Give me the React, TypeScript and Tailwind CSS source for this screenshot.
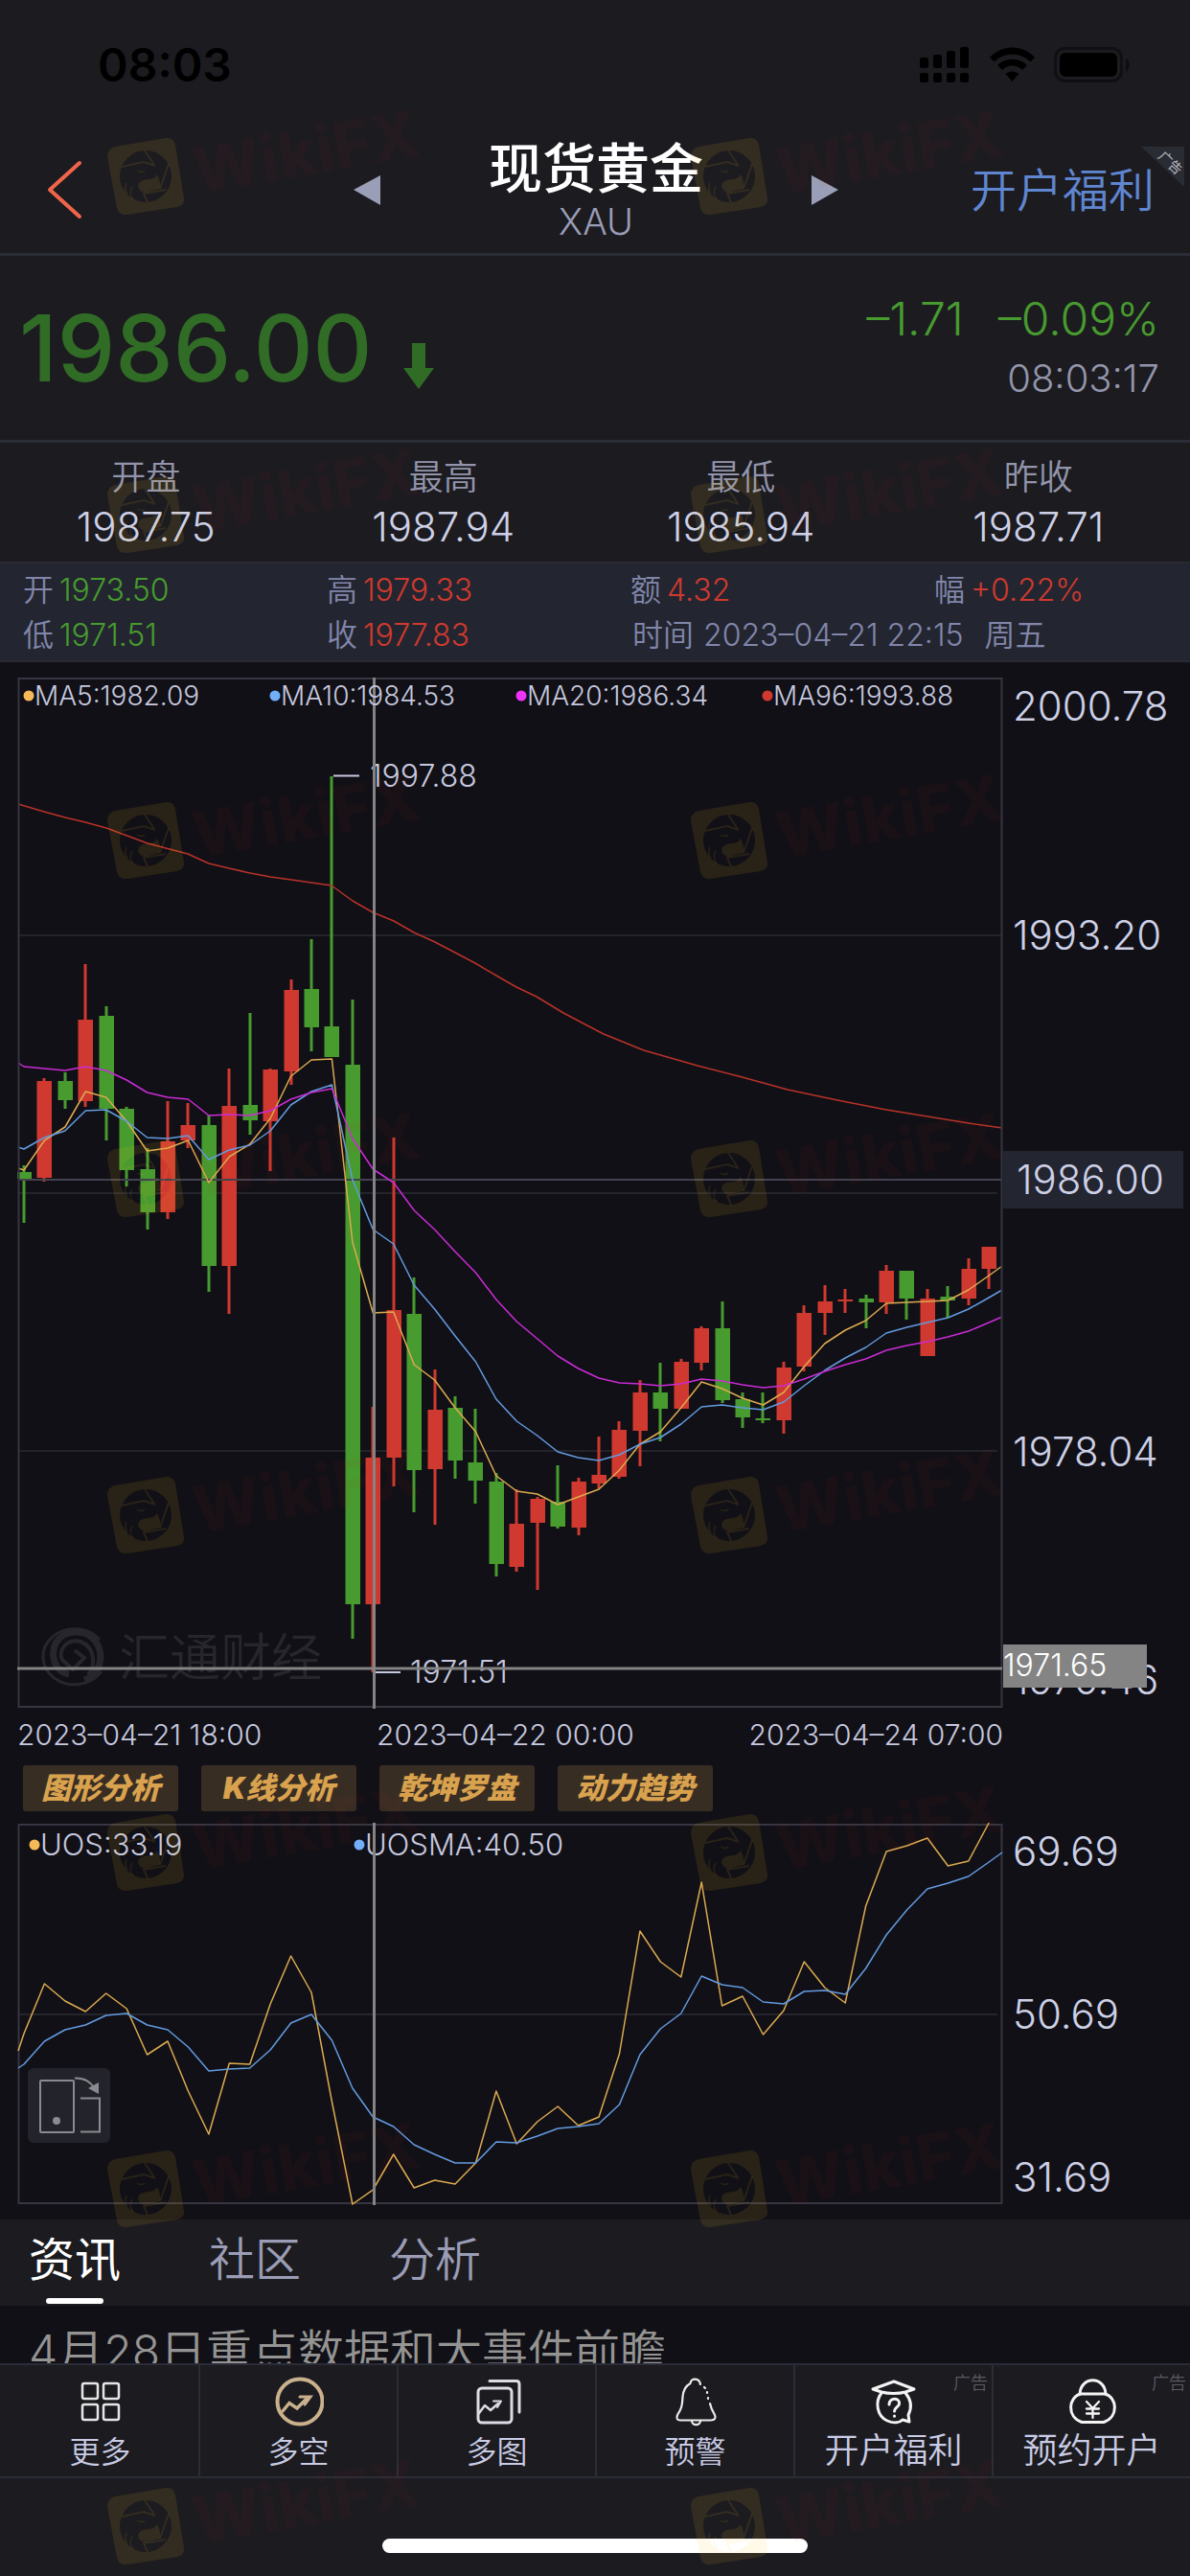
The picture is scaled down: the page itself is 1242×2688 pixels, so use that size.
import React from "react";

const UP = "#d0392f";
const DOWN = "#479b2f";
const X0 = 25;
const STEP = 21.43;

/* Each candle: direction, high, body top, body bottom, low (chart units). */
type Candle = ["u" | "d", number, number, number, number];

const candles: Candle[] = [
  ["d", 1216, 1223, 1230, 1276],
  ["u", 1125, 1128, 1229, 1233],
  ["d", 1119, 1128, 1148, 1157],
  ["u", 1006, 1064, 1149, 1155],
  ["d", 1050, 1060, 1157, 1190],
  ["d", 1155, 1157, 1221, 1238],
  ["d", 1198, 1220, 1265, 1283],
  ["u", 1149, 1191, 1265, 1272],
  ["u", 1151, 1174, 1190, 1198],
  ["d", 1164, 1174, 1321, 1348],
  ["u", 1115, 1154, 1321, 1371],
  ["d", 1057, 1153, 1169, 1184],
  ["u", 1115, 1116, 1170, 1222],
  ["u", 1022, 1033, 1118, 1132],
  ["d", 980, 1032, 1072, 1097],
  ["d", 810, 1071, 1103, 1103],
  ["d", 1043, 1111, 1674, 1710],
  ["u", 1468, 1521, 1674, 1745],
  ["u", 1187, 1367, 1521, 1551],
  ["d", 1333, 1371, 1534, 1578],
  ["u", 1429, 1471, 1533, 1591],
  ["d", 1457, 1469, 1524, 1543],
  ["d", 1470, 1526, 1545, 1569],
  ["d", 1537, 1546, 1632, 1645],
  ["u", 1554, 1590, 1635, 1640],
  ["u", 1562, 1564, 1589, 1659],
  ["d", 1529, 1567, 1593, 1595],
  ["u", 1542, 1546, 1594, 1602],
  ["u", 1499, 1539, 1548, 1553],
  ["u", 1483, 1492, 1541, 1543],
  ["u", 1440, 1453, 1493, 1530],
  ["d", 1422, 1453, 1470, 1504],
  ["u", 1418, 1421, 1470, 1470],
  ["u", 1384, 1386, 1422, 1430],
  ["d", 1358, 1386, 1461, 1464],
  ["d", 1453, 1460, 1479, 1490],
  ["d", 1453, 1480, 1482, 1485],
  ["u", 1421, 1427, 1482, 1496],
  ["u", 1362, 1370, 1426, 1431],
  ["u", 1341, 1358, 1370, 1393],
  ["u", 1345, 1356, 1358, 1370],
  ["d", 1351, 1355, 1359, 1386],
  ["u", 1320, 1326, 1359, 1371],
  ["d", 1326, 1326, 1355, 1377],
  ["u", 1345, 1355, 1415, 1415],
  ["d", 1342, 1353, 1357, 1375],
  ["u", 1313, 1324, 1355, 1362],
  ["u", 1301, 1301, 1324, 1345],
];

/* Series carry one value at the left edge, one per candle and one at the right edge. */
const ma5 = [1219, 1221, 1190, 1176, 1139, 1145, 1170, 1201, 1198, 1190, 1234, 1207, 1194, 1167, 1123, 1106, 1105, 1296, 1370, 1369, 1424, 1440, 1469, 1494, 1540, 1556, 1559, 1570, 1562, 1554, 1534, 1507, 1494, 1469, 1442, 1449, 1459, 1466, 1453, 1426, 1402, 1388, 1378, 1360, 1359, 1358, 1357, 1346, 1331, 1321];
const ma10 = [1197, 1199, 1187, 1180, 1159, 1158, 1170, 1187, 1188, 1185, 1210, 1200, 1195, 1180, 1153, 1139, 1132, 1231, 1283, 1298, 1341, 1366, 1394, 1421, 1460, 1483, 1498, 1515, 1521, 1524, 1518, 1507, 1500, 1486, 1468, 1466, 1469, 1471, 1463, 1446, 1430, 1417, 1406, 1391, 1385, 1380, 1375, 1366, 1354, 1346];
const ma20 = [1109, 1113, 1115, 1117, 1113, 1117, 1127, 1140, 1145, 1147, 1164, 1163, 1164, 1159, 1147, 1140, 1136, 1188, 1220, 1234, 1263, 1283, 1306, 1328, 1356, 1379, 1397, 1415, 1428, 1438, 1443, 1444, 1446, 1444, 1439, 1441, 1445, 1448, 1446, 1439, 1431, 1424, 1418, 1409, 1404, 1400, 1395, 1389, 1380, 1374];
const ma96 = "19,839 46,847 68,853 89,858 111,864 154,880 196,891 218,901 239,906 261,911 282,915 304,918 346,924 368,940 389,952 411,961 432,973 454,983 475,994 496,1005 518,1018 539,1030 560,1040 588,1057 630,1079 672,1096 728,1112 771,1123 822,1137 874,1148 925,1158 968,1165 1011,1172 1046,1177";
const uos = [2140, 2122, 2070, 2088, 2099, 2080, 2096, 2144, 2130, 2182, 2227, 2153, 2154, 2091, 2041, 2079, 2193, 2300, 2285, 2248, 2283, 2275, 2279, 2257, 2182, 2237, 2214, 2198, 2218, 2209, 2143, 2015, 2047, 2063, 1964, 2093, 2083, 2123, 2098, 2047, 2074, 2090, 1989, 1932, 1926, 1918, 1947, 1942, 1902];
const uosma = [2158, 2154, 2130, 2118, 2113, 2103, 2101, 2113, 2118, 2136, 2161, 2159, 2158, 2139, 2111, 2102, 2129, 2179, 2209, 2219, 2238, 2248, 2257, 2257, 2235, 2236, 2229, 2221, 2219, 2216, 2196, 2144, 2117, 2101, 2062, 2071, 2074, 2089, 2091, 2078, 2077, 2081, 2054, 2019, 1993, 1971, 1965, 1958, 1943, 1933];

function toPoints(values: number[]) {
  return values
    .map((y, i) => {
      const x = i === 0 ? 19 : Math.min(X0 + (i - 1) * STEP, 1046);
      return `${x.toFixed(1)},${y}`;
    })
    .join(" ");
}

function StatusIcons() {
  return (
    <svg width="220" height="38" viewBox="0 0 220 38" aria-label="信号与电量">
      <g fill="#000">
        <rect x="0" y="11" width="9" height="11" rx="2.5" />
        <rect x="14" y="8" width="9" height="14" rx="2.5" />
        <rect x="28" y="4" width="9" height="18" rx="2.5" />
        <rect x="42" y="0" width="9" height="22" rx="2.5" />
        <rect x="0" y="27" width="9" height="10" rx="2.5" />
        <rect x="14" y="27" width="9" height="10" rx="2.5" />
        <rect x="28" y="27" width="9" height="10" rx="2.5" />
        <rect x="42" y="27" width="9" height="10" rx="2.5" />
        <path d="M73 11 C86 -3 107 -3 120 11 L115.500 15.500 C105 5 88 5 77.500 15.500 Z" />
        <path d="M81 19 C89.500 10.500 103.500 10.500 112 19 L107 24 C101 18 92 18 86 24 Z" />
        <path d="M89.500 28 C93.500 24.500 99.500 24.500 103.500 28 L96.500 36 Z" />
        <rect x="146" y="6" width="60" height="25" rx="6" />
        <path d="M215 12 C220 14 220 24 215 26 Z" opacity="0.5" />
      </g>
      <rect x="141.500" y="1.500" width="69" height="34" rx="10" fill="none" stroke="#101014" strokeWidth="3" />
    </svg>
  );
}

function Header() {
  return (
    <header className="border-b-[3px] border-[#2a2d37] bg-[#1c1b20]">
      <div className="flex h-[134px] items-center justify-between pt-0.5 pr-[62px] pl-[102px]">
        <time className="text-[48px] leading-[56px] font-semibold text-black">08:03</time>
        <StatusIcons />
      </div>
      <div className="relative grid h-[130px] grid-cols-[1fr_508px_1fr] items-center">
        <button type="button" aria-label="返回" className="ml-12 h-16 w-10">
          <svg width="40" height="64" viewBox="0 0 40 64" fill="none" stroke="#f0654a" strokeWidth="4" strokeLinecap="round" strokeLinejoin="round">
            <path d="M35 3 L4 31 L35 59" />
          </svg>
        </button>
        <div className="flex items-center justify-between">
          <button type="button" aria-label="上一个" className="h-8 w-[30px]">
            <svg width="30" height="32" viewBox="0 0 30 32"><path d="M2 15 L30 0 V31 Z" fill="#9a9eb6" /></svg>
          </button>
          <div className="flex flex-col items-center">
            <h1 className="text-[56px] leading-[64px] font-medium text-white">现货黄金</h1>
            <p className="text-[38px] leading-[46px] font-[350] text-[#9a9db5]">XAU</p>
          </div>
          <button type="button" aria-label="下一个" className="h-8 w-[28px]">
            <svg width="28" height="32" viewBox="0 0 28 32"><path d="M28 15 L0 0 V31 Z" fill="#9a9eb6" /></svg>
          </button>
        </div>
        <a href="#welfare" className="justify-self-end pr-[37px] text-[48px] leading-[64px] font-[350] text-[#5f86d0]">开户福利</a>
        <span className="absolute top-[19px] right-1.5">
          <svg width="45" height="42" viewBox="0 0 45 42">
            <path d="M0 0 H45 V42 Z" fill="#2a2c34" />
            <text x="0" y="0" fill="#b9b9bd" fontSize="14" transform="translate(17 11) rotate(43)">广告</text>
          </svg>
        </span>
      </div>
    </header>
  );
}

function Price() {
  return (
    <section className="flex h-[195px] items-center justify-between border-b-[3px] border-[#2a2d37] bg-[#1c1b20] pr-8 pl-5">
      <div className="flex items-end text-[#306c26]">
        <span className="text-[96px] leading-[110px] font-medium">1986.00</span>
        <svg className="mb-3 ml-8" width="32" height="48" viewBox="0 0 32 48"><path d="M9 0 H23 V26 H32 L16 48 L0 26 H9 Z" fill="#306c26" /></svg>
      </div>
      <div className="flex flex-col items-end gap-2">
        <p className="flex gap-9 text-[48px] leading-[56px] font-[350] text-[#479b2f]">
          <span>–1.71</span>
          <span>–0.09%</span>
        </p>
        <time className="text-[40px] leading-[52px] font-[350] text-[#9295ab]">08:03:17</time>
      </div>
    </section>
  );
}

function Summary() {
  const items = [
    ["开盘", "1987.75"],
    ["最高", "1987.94"],
    ["最低", "1985.94"],
    ["昨收", "1987.71"],
  ];
  return (
    <dl className="grid h-[124px] grid-cols-4 bg-[#1c1b20] pt-2.5">
      {items.map(([label, value]) => (
        <div key={label} className="flex flex-col items-center pr-1.5">
          <dt className="text-[36px] leading-[52px] font-[350] text-[#9295ab]">{label}</dt>
          <dd className="text-[42px] leading-[52px] font-[350] text-[#cdd0e6]">{value}</dd>
        </div>
      ))}
    </dl>
  );
}

function Cell({ label, value, tone }: { label: string; value: string; tone: "up" | "down" }) {
  return (
    <span className="flex items-center gap-1.5">
      <span className="text-[#8286ab]">{label}</span>
      <span className={tone === "up" ? "text-[#d0392f]" : "text-[#479b2f]"}>{value}</span>
    </span>
  );
}

function InfoBar() {
  return (
    <section className="grid h-[105px] grid-cols-[317fr_317fr_317fr_267fr] content-center border-y-2 border-[#292a30] bg-[#232630] pl-6 text-[32px] leading-[47px] font-[350]">
      <Cell label="开" value="1973.50" tone="down" />
      <Cell label="高" value="1979.33" tone="up" />
      <Cell label="额" value="4.32" tone="up" />
      <Cell label="幅" value="+0.22%" tone="up" />
      <Cell label="低" value="1971.51" tone="down" />
      <Cell label="收" value="1977.83" tone="up" />
      <span className="col-span-2 flex gap-2.5 pl-0.5 text-[#8286ab]">
        <span>时间</span>
        <span>2023–04–21 22:15</span>
        <span className="pl-3">周五</span>
      </span>
    </section>
  );
}

function Legend({ color, text }: { color: string; text: string }) {
  return (
    <span className="flex items-center">
      <svg width="12" height="12" viewBox="0 0 12 12"><circle cx="6" cy="6" r="5.500" fill={color} /></svg>
      {text}
    </span>
  );
}

function KLineChart() {
  return (
    <section className="flex bg-[#111016] pt-4">
      <div className="relative min-w-0 flex-1">
        <svg className="block h-[1076px] w-full" viewBox="0 707 1047 1076" preserveAspectRatio="none" role="img" aria-label="现货黄金K线图">
          <g stroke="#23232c" strokeWidth="2">
            <path d="M20 976 H1046 M20 1245 H1041 M20 1514 H1041" />
          </g>
          {/* provider mark */}
          <g fill="none" stroke="#27262d">
            <path d="M104 1711 A33 29 0 1 0 106 1744" strokeWidth="3" />
            <path d="M88 1753 C104 1748 110 1728 100 1713 C90 1699 66 1700 58 1715 C52 1729 58 1745 72 1747" strokeWidth="7" />
            <path d="M92 1748 C101 1736 98 1718 84 1713 C70 1709 60 1722 65 1732 L76 1742 L88 1730 L78 1722" strokeWidth="4" />
          </g>
          <text x="124" y="1749" fontSize="53" fontWeight="350" fill="#27262d">汇通财经</text>
          {candles.map(([dir, high, top, bottom, low], i) => {
            const x = Math.round(X0 + i * STEP);
            const left = Math.max(x - 7.5, 18);
            const color = dir === "u" ? UP : DOWN;
            return (
              <g key={i} fill={color}>
                <rect x={x - 1.5} y={high} width="3" height={Math.max(low - high, 1)} />
                <rect x={left} y={top} width={x + 8 - left} height={Math.max(bottom - top, 2)} />
              </g>
            );
          })}
          <path d="M19 1231 H1046" stroke="#43424e" strokeWidth="2" />
          <g fill="none" strokeWidth="1.500" strokeLinejoin="round">
            <polyline points={ma96} stroke="#b93229" />
            <polyline points={toPoints(ma5)} stroke="#dcaa50" />
            <polyline points={toPoints(ma10)} stroke="#639be0" />
            <polyline points={toPoints(ma20)} stroke="#cb2bd6" />
          </g>
          <path d="M19.500 708 H1045.500 V1781 H19.500 Z" fill="none" stroke="#363541" strokeWidth="2" />
          <path d="M348 809.500 H375 M392 1745 H418" stroke="#c6c8df" strokeWidth="2" />
          <g fill="#c6c8df" fontSize="32" fontWeight="350">
            <text x="386" y="821">1997.88</text>
            <text x="428" y="1756">1971.51</text>
          </g>
          <path d="M390.500 707 V1783 M18 1741 H1046" stroke="#848484" strokeWidth="3" />
        </svg>
        <div className="absolute top-1 left-6 grid w-[1028px] grid-cols-4 text-[28px] leading-[30px] font-light text-[#c6c8df]">
          <Legend color="#f5b95a" text="MA5:1982.09" />
          <Legend color="#73aef8" text="MA10:1984.53" />
          <Legend color="#ee33fa" text="MA20:1986.34" />
          <Legend color="#d0392f" text="MA96:1993.88" />
        </div>
        <div className="flex h-[54px] items-center justify-between pl-[18px] text-[30px] leading-[40px] font-[350] text-[#c6c8df]">
          <time>2023–04–21 18:00</time>
          <time>2023–04–22 00:00</time>
          <time>2023–04–24 07:00</time>
        </div>
      </div>
      <div className="relative w-[195px] text-[42px] leading-[60px] font-[350] text-[#cdd0e6]">
        <span className="absolute top-0 left-2.5">2000.78</span>
        <span className="absolute top-[239px] left-2.5">1993.20</span>
        <span className="absolute top-[508px] left-2.5">1985.62</span>
        <span className="absolute top-[494px] left-0 w-[188px] bg-[#232530] pl-3.5">1986.00</span>
        <span className="absolute top-[778px] left-2.5">1978.04</span>
        <span className="absolute top-[1016px] left-2.5">1970.46</span>
        <span className="absolute top-[1009px] left-0 h-[45px] w-[150px] bg-[#848484] text-[32px] leading-[44px] text-white">1971.65</span>
      </div>
    </section>
  );
}

function Tools() {
  return (
    <nav className="flex h-[65px] gap-6 bg-[#111016] pt-[5px] pl-6" aria-label="分析工具">
      {["图形分析", "K线分析", "乾坤罗盘", "动力趋势"].map((t) => (
        <button key={t} type="button" className="h-12 w-[162px] rounded-[3px] bg-[#382d23] text-[31px] leading-[48px] font-black text-[#d9a24e] italic">
          {t}
        </button>
      ))}
    </nav>
  );
}

function UosChart() {
  return (
    <section className="flex h-[414px] bg-[#111016]">
      <div className="relative min-w-0 flex-1">
        <svg className="block h-[400px] w-full" viewBox="0 1902 1047 400" preserveAspectRatio="none" role="img" aria-label="UOS 指标">
          <path d="M20 2102 H1041" stroke="#25252d" strokeWidth="2" />
          <path d="M19.500 1904 H1045.500 V2299 H19.500 Z" fill="none" stroke="#363541" strokeWidth="2" />
          <g fill="none" strokeWidth="1.500" strokeLinejoin="round">
            <polyline points={toPoints(uos)} stroke="#dcaa50" />
            <polyline points={toPoints(uosma)} stroke="#639be0" />
          </g>
        </svg>
        <div className="absolute top-1 left-[30px] grid w-[678px] grid-cols-2 text-[31px] leading-[38px] font-[350] text-[#c6c8df]">
          <Legend color="#f5b95a" text="UOS:33.19" />
          <Legend color="#73aef8" text="UOSMA:40.50" />
        </div>
        <svg className="absolute inset-0 h-[400px] w-full" viewBox="0 0 1047 400" preserveAspectRatio="none" aria-hidden="true">
          <path d="M390.500 0 V399" stroke="#848484" strokeWidth="3" />
        </svg>
        <button type="button" aria-label="横屏" className="absolute top-[256px] left-[29px] h-[78px] w-[86px] rounded-md bg-[#22232b]">
          <svg width="86" height="78" viewBox="0 0 86 78" fill="none" stroke="#8b8b8f" strokeWidth="2">
            <rect x="13" y="13" width="35" height="54" rx="1" />
            <path d="M55 31.500 H75 V66.500 H55" />
            <path d="M49 10.500 C60 10 65 15 69 20" />
            <path d="M63 21 L74 15 L74 27 Z" fill="#8b8b8f" stroke="none" />
            <circle cx="30" cy="55" r="4" fill="#8b8b8f" stroke="none" />
          </svg>
        </button>
      </div>
      <div className="flex h-[400px] w-[195px] flex-col justify-between pl-2.5 text-[42px] leading-[60px] font-[350] text-[#cdd0e6]">
        <span>69.69</span>
        <span>50.69</span>
        <span>31.69</span>
      </div>
    </section>
  );
}

function News() {
  return (
    <section className="bg-[#111016]">
      <div role="tablist" className="flex h-[90px] gap-[92px] bg-[#1c1b20] pl-[30px] text-[48px] leading-[84px] font-[350] text-[#9a9db5]">
        <button type="button" role="tab" aria-selected="true" className="relative h-[88px] font-normal text-white">
          <span className="block h-[88px]">资讯</span>
          <span className="absolute bottom-0 left-[18px] h-1.5 w-[60px] rounded-full bg-white" />
        </button>
        <button type="button" role="tab" aria-selected="false" className="h-[88px]"><span className="block h-[88px]">社区</span></button>
        <button type="button" role="tab" aria-selected="false" className="h-[88px]"><span className="block h-[88px]">分析</span></button>
      </div>
      <div className="h-[60px] overflow-hidden pt-3 pl-[30px]">
        <a href="#news" className="block text-[48px] leading-[72px] font-[350] text-[#949493]">4月28日重点数据和大事件前瞻</a>
      </div>
    </section>
  );
}

const svgProps = { width: 52, height: 52, viewBox: "0 0 52 52", fill: "none", strokeLinecap: "round", strokeLinejoin: "round" } as const;

const navItems: { label: string; size: "sm" | "lg"; ad?: boolean; icon: React.ReactNode }[] = [
  {
    label: "更多",
    size: "sm",
    icon: (
      <svg {...svgProps} stroke="#e6e6e6" strokeWidth="2.500">
        <rect x="7" y="7" width="16" height="16" rx="2" />
        <rect x="29" y="7" width="16" height="16" rx="2" />
        <rect x="7" y="29" width="16" height="16" rx="2" />
        <rect x="29" y="29" width="16" height="16" rx="2" />
      </svg>
    ),
  },
  {
    label: "多空",
    size: "sm",
    icon: (
      <svg {...svgProps} stroke="#c9b18c" strokeWidth="4" strokeLinejoin="miter">
        <circle cx="27" cy="26" r="23.500" />
        <path d="M9 36 L16 27.500 L24 33 L35 22" strokeWidth="3.500" />
        <path d="M27 21 H38 L32 29" strokeWidth="3" />
      </svg>
    ),
  },
  {
    label: "多图",
    size: "sm",
    icon: (
      <svg {...svgProps} stroke="#dcdce4" strokeWidth="3">
        <rect x="6" y="12" width="35" height="36" rx="4" />
        <path d="M18 4.500 H46 Q49 4.500 49 8 V37" />
        <path d="M7 38 L13 30 L19 35 L27 28" strokeWidth="2.500" />
        <path d="M22 25.500 H30 L26 32" strokeWidth="2" />
      </svg>
    ),
  },
  {
    label: "预警",
    size: "sm",
    icon: (
      <svg {...svgProps} stroke="#ececec" strokeWidth="2.200">
        <path d="M31 8 C30 1 21 1 20.500 7 C15 10 13 15 12.500 21 C12 31 11 34 7 40 C5.500 44 7 45.500 10 45.500 H42 C46 45.500 47.500 43 46 40 C43 35 42 33 41 28" />
        <path d="M35 11 L36 12 M38 16 V17 M39 22 V23" />
        <path d="M22 46 C22 51.500 31 51.500 31 46" />
      </svg>
    ),
  },
  {
    label: "开户福利",
    size: "lg",
    ad: true,
    icon: (
      <svg {...svgProps} stroke="#f4f4f4" strokeWidth="3">
        <path d="M4 13 L26 5 L47 13 L38 16 C31 18 20 18 13 16 Z" />
        <path d="M13 17 C6 26 8 41 19 46 C26 49 32 48 35 45 L42 47 L41 40 C45 32 44 24 38 17" />
        <path d="M21 29 C21 21 33 22 31.500 28.500 C31 31.500 26.500 32 26.500 36 M26.500 41 V41.200" />
      </svg>
    ),
  },
  {
    label: "预约开户",
    size: "lg",
    ad: true,
    icon: (
      <svg {...svgProps} stroke="#f4f4f4" strokeWidth="3">
        <path d="M13 18 C14 -1 39 -1 40 18" />
        <path d="M14 18 H39 C52 21 54 42 38 47.500 H15 C-1 42 1 21 14 18 Z" />
        <path d="M20 26 L26.500 33 L33 26 M26.500 33 V43 M20 33.500 H33 M20 38.500 H33" strokeWidth="2.300" />
      </svg>
    ),
  },
];

function BottomBar() {
  return (
    <footer className="border-t-2 border-[#2a2d37] bg-[#1c1b20]">
      <nav className="grid h-[118px] grid-cols-6 border-b-2 border-[#2a2d37]">
        {navItems.map((item) => (
          <button key={item.label} type="button" className="relative flex flex-col items-center border-l-2 border-[#2a2d37] pt-3 font-[350] text-[#c9cce4] first:border-l-transparent">
            {item.icon}
            <span className={item.size === "lg" ? "text-[36px] leading-[50px]" : "pt-1 text-[32px] leading-[46px]"}>{item.label}</span>
            {item.ad && <span className="absolute top-1.5 right-1 text-[18px] leading-[26px] text-[#5a5a60]">广告</span>}
          </button>
        ))}
      </nav>
      <div className="flex h-[102px] justify-center pt-[63px]">
        <div className="h-[15px] w-[444px] rounded-full bg-white" />
      </div>
    </footer>
  );
}

function Mark() {
  return (
    <svg width="350" height="130" viewBox="0 0 350 130">
      <path
        fillRule="evenodd"
        fill="#ffc42a"
        fillOpacity="0.1"
        d="M20 46 L73 37 Q81 36 83 44 L92 100 Q93 107 85 109 L33 117 Q24 118 22 110 L12 57 Q12 48 20 46 Z M52 50 A27 27 0 1 0 52 104 A27 27 0 1 0 52 50 Z"
      />
      {/* aperture blades */}
      <path d="M51 50 L61 65 M76 64 L67 90 M73 91 L50 95 L54 104 M27 67 L50 62 L62 66" fill="none" stroke="#ffc42a" strokeOpacity="0.1" strokeWidth="2" />
      {/* throat and beak line of the eagle */}
      <path d="M64 75 C66 79 68 84 67 90 L51 94 C44 92 42 86 47 82 C52 79 60 82 64 75 Z" fill="#ffc42a" fillOpacity="0.1" />
      <path d="M43 71 C46 73 49 73 51 71 M38 88 C35 93 36 98 39 101 M32 84 C30 89 31 93 33 95" fill="none" stroke="#ffc42a" strokeOpacity="0.1" strokeWidth="1.500" />
      <text x="0" y="0" transform="translate(106 96) rotate(-10)" fontSize="67" fontWeight="800" fill="#e02818" fillOpacity="0.04">
        WikiFX
      </text>
    </svg>
  );
}

const markRows = [107, 460, 800, 1153, 1504, 1856, 2207, 2559];

function MarkLayer() {
  return (
    <div aria-hidden="true" className="pointer-events-none absolute inset-0 overflow-hidden">
      {markRows.map((top) => (
        <div key={top} className="absolute right-0 left-[100px] flex gap-[259px]" style={{ top }}>
          <Mark />
          <Mark />
        </div>
      ))}
    </div>
  );
}

export default function App() {
  return (
    <div className="relative min-h-screen w-full overflow-hidden bg-[#1c1b20] font-['Inter','Noto_Sans_CJK_SC',sans-serif]">
      <Header />
      <Price />
      <Summary />
      <InfoBar />
      <KLineChart />
      <Tools />
      <UosChart />
      <News />
      <BottomBar />
      <MarkLayer />
    </div>
  );
}
